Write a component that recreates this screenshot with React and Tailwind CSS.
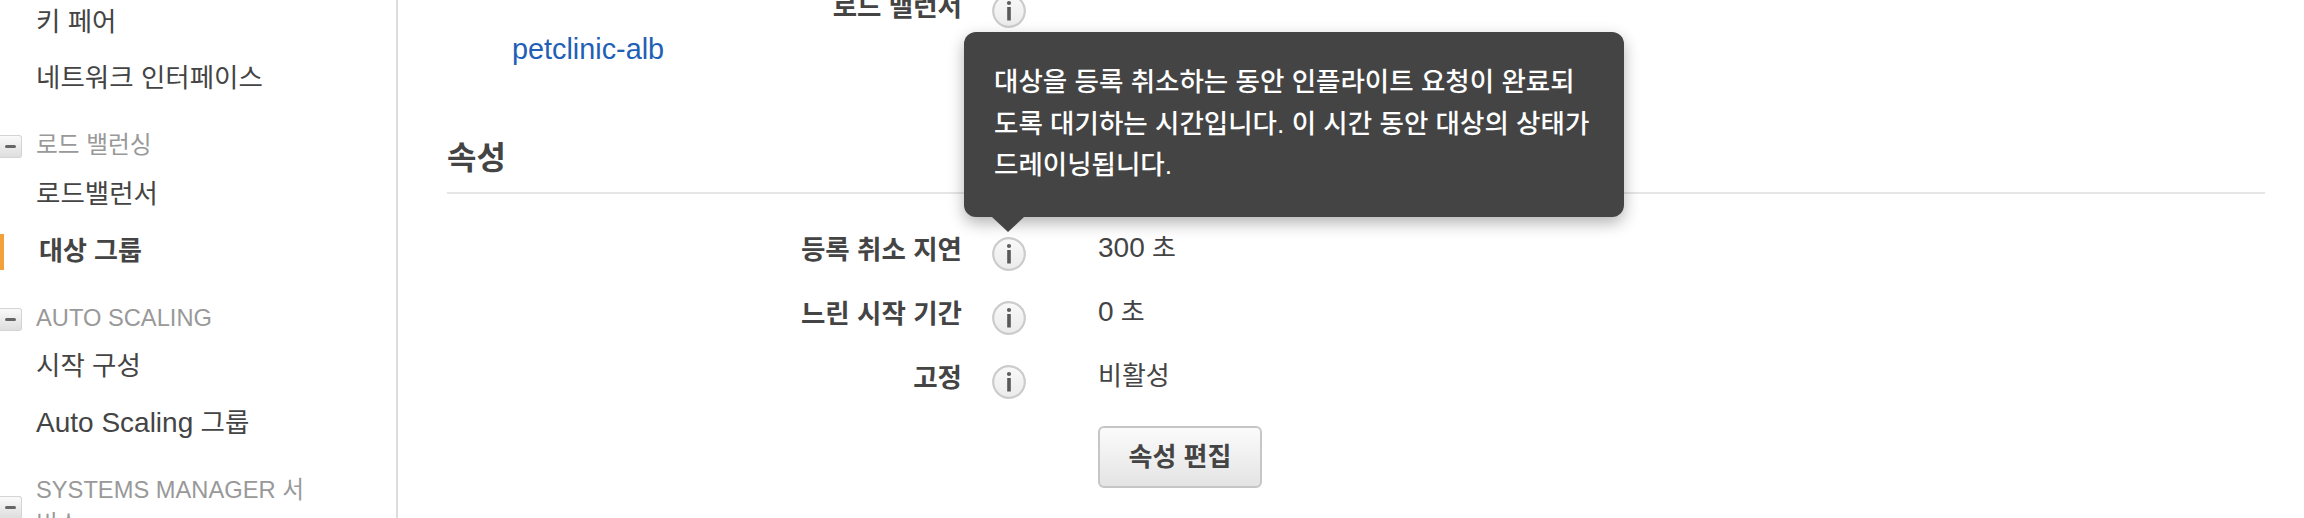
import React from 'react';

const FONT = "font-['Liberation_Sans','Noto_Sans_CJK_KR',sans-serif]";

const InfoIcon = () => (
  <svg width="36" height="36" viewBox="0 0 36 36" className="shrink-0 translate-y-[3px]">
    <defs>
      <linearGradient id="info-fill" x1="0" y1="0" x2="0" y2="1">
        <stop offset="0" stopColor="#f9f9f9" />
        <stop offset="1" stopColor="#ebebeb" />
      </linearGradient>
    </defs>
    <circle cx="18" cy="18" r="15.8" fill="url(#info-fill)" stroke="#cbcbcb" strokeWidth="2.2" />
    <circle cx="18" cy="10" r="2.1" fill="#5e5e5e" />
    <rect x="16.2" y="14" width="3.6" height="13.5" fill="#595959" />
  </svg>
);

const CollapseBox = () => (
  <span className="flex h-[23px] w-[22px] shrink-0 items-center justify-center rounded-r-[3px] border border-l-0 border-[#d4d4d4] bg-gradient-to-b from-[#fafafa] to-[#dedede]">
    <span className="h-[3px] w-[11px] rounded-sm bg-[#666]" />
  </span>
);

const NavItem = ({ children, active }) => (
  <div className="relative flex h-[56px] items-center pl-[36px]">
    {active && <span className="absolute left-0 top-[11px] h-[36px] w-[4px] bg-[#f2a03b]" />}
    <span className={active ? 'pl-[3px] text-[26px] font-bold text-[#444]' : 'text-[26.5px] text-[#444]'}>
      {children}
    </span>
  </div>
);

const NavGroup = ({ children }) => (
  <div className="flex h-[40px] items-center gap-[14px]">
    <CollapseBox />
    <span className="text-[23.7px] text-[#999]">{children}</span>
  </div>
);

const PropRow = ({ label, children }) => (
  <div className="flex h-[64px] items-center">
    <div className="w-[564px] text-right text-[26.5px] font-bold text-[#444]">{label}</div>
    <div className="ml-[29px]">
      <InfoIcon />
    </div>
    <div className="ml-[71px] -translate-y-[3px] text-[26px] text-[#444]">{children}</div>
  </div>
);

export default function App() {
  return (
    <div className={`relative flex h-[518px] overflow-hidden bg-white ${FONT}`}>
      {/* Sidebar */}
      <aside className="h-[518px] w-[398px] shrink-0 border-r-2 border-[#ddd]">
        <div className="-mt-[5px]">
          <NavItem>키 페어</NavItem>
          <NavItem>네트워크 인터페이스</NavItem>
          <div className="mt-[19px]">
            <NavGroup>로드 밸런싱</NavGroup>
          </div>
          <div className="mt-[1px]">
            <NavItem>로드밸런서</NavItem>
            <NavItem active>대상 그룹</NavItem>
          </div>
          <div className="mt-[20px]">
            <NavGroup>AUTO SCALING</NavGroup>
          </div>
          <div className="mt-[0px]">
            <NavItem>시작 구성</NavItem>
            <NavItem>
              <span className="text-[28px]">Auto Scaling</span> 그룹
            </NavItem>
          </div>
          <div className="mt-[22px] flex items-center gap-[14px]">
            <CollapseBox />
            <span className="w-[272px] text-[23.7px] leading-[34px] text-[#999]">SYSTEMS MANAGER 서비스</span>
          </div>
        </div>
      </aside>

      {/* Main content */}
      <main className="relative flex-1 pr-[39px]">
        <div className="-mt-[24px]">
          <PropRow label="로드 밸런서" />
          <div className="-mt-[11px] pl-[114px] text-[28.8px] leading-[40px] text-[#1f5fb5]">petclinic-alb</div>
          <div className="ml-[49px] mt-[67px] border-b-2 border-[#e6e6e6] pb-[12px] text-[32px] font-bold leading-[44px] text-[#444]">
            속성
          </div>
          <div className="mt-[25px]">
            <PropRow label="등록 취소 지연">
              <span className="text-[28px]">300</span> 초
            </PropRow>
            <PropRow label="느린 시작 기간">
              <span className="text-[28px]">0</span> 초
            </PropRow>
            <PropRow label="고정">비활성</PropRow>
          </div>
          <button className="ml-[700px] mt-[15px] h-[62px] w-[164px] rounded-[6px] border-2 border-[#c6c6c6] bg-gradient-to-b from-[#fbfbfb] to-[#e4e4e4] text-[26px] font-bold text-[#444]">
            속성 편집
          </button>
        </div>

        {/* Tooltip */}
        <div className="absolute left-[566px] top-[32px] w-[660px] rounded-[12px] bg-[#444] pb-[30px] pl-[30px] pr-[10px] pt-[30px] text-[26.5px] font-medium leading-[41.5px] text-white shadow-[0_6px_16px_rgba(0,0,0,0.3)]">
          대상을 등록 취소하는 동안 인플라이트 요청이 완료되
          <br />
          도록 대기하는 시간입니다. 이 시간 동안 대상의 상태가
          <br />
          드레이닝됩니다.
          <span className="absolute left-[28px] top-full h-0 w-0 border-x-[16px] border-t-[15px] border-x-transparent border-t-[#444]" />
        </div>
      </main>
    </div>
  );
}
